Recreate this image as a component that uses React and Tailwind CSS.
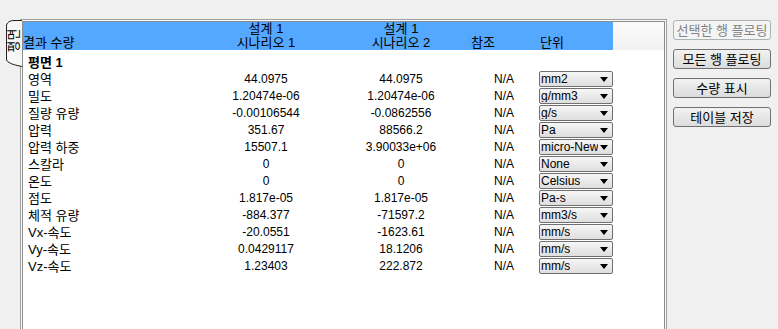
import React from "react";

const rows = [
  ["영역", "44.0975", "44.0975", "mm2"],
  ["밀도", "1.20474e-06", "1.20474e-06", "g/mm3"],
  ["질량 유량", "-0.00106544", "-0.0862556", "g/s"],
  ["압력", "351.67", "88566.2", "Pa"],
  ["압력 하중", "15507.1", "3.90033e+06", "micro-New"],
  ["스칼라", "0", "0", "None"],
  ["온도", "0", "0", "Celsius"],
  ["점도", "1.817e-05", "1.817e-05", "Pa-s"],
  ["체적 유량", "-884.377", "-71597.2", "mm3/s"],
  ["Vx-속도", "-20.0551", "-1623.61", "mm/s"],
  ["Vy-속도", "0.0429117", "18.1206", "mm/s"],
  ["Vz-속도", "1.23403", "222.872", "mm/s"],
];

const cols = "grid grid-cols-[178px_130px_140px_62px_80px]";

function UnitSelect({ value }) {
  return (
    <div className="flex items-center justify-between w-[74px] h-[16px] border border-[#707070] rounded-[2px] bg-gradient-to-b from-[#f6f6f6] to-[#dedede] pl-[1px] pr-[4px] overflow-hidden">
      <span className="whitespace-nowrap overflow-hidden leading-none text-black">{value}</span>
      <svg width="8" height="5" viewBox="0 0 8 5" className="shrink-0">
        <path d="M0 0 H8 L4 5 Z" fill="#000" />
      </svg>
    </div>
  );
}

function Button({ children, disabled }) {
  return (
    <button
      className={
        "w-[98px] h-[20px] rounded-[3px] border text-[13px] leading-none whitespace-nowrap " +
        (disabled
          ? "border-[#adb2b5] bg-[#f4f4f4] text-[#838383]"
          : "border-[#707070] bg-gradient-to-b from-[#f2f2f2] to-[#dcdcdc] text-black")
      }
    >
      {children}
    </button>
  );
}

function SideTab() {
  return (
    <div className="relative w-[16px] h-[47px] shrink-0 flex justify-center pt-[6px]">
      <svg className="absolute inset-0" width="16" height="47" viewBox="0 0 16 47">
        <path
          d="M16 0.5 H8 Q2 0.5 0.5 5 V40 Q2 44 16 46.5"
          fill="#f7f7f7"
          stroke="#222"
          strokeWidth="1"
        />
      </svg>
      <div className="relative h-[28px] w-[13px] flex items-center justify-center">
        <span className="-rotate-90 text-[13px] leading-none whitespace-nowrap text-black">
          평면
        </span>
      </div>
    </div>
  );
}

export default function App() {
  return (
    <div
      className="w-[778px] h-[329px] bg-[#f0f0f0] overflow-hidden flex items-start pt-[19px] pl-[6px] text-[12px] text-black"
      style={{ fontFamily: '"Liberation Sans", "Noto Sans CJK KR", sans-serif' }}
    >
      <div className="pt-[1px] -mr-[2px] z-10">
        <SideTab />
      </div>

      <div className="w-[647px] h-[330px] shrink-0 border border-[#a0a0a0] p-px bg-[#f9f9f9]">
        <div className="h-full border border-[#8c8c8c] bg-white flex flex-col">
          <div className="flex h-[28px] shrink-0">
            <div className={cols + " w-[590px] bg-[#55a8ff] items-end text-[13px]"}>
              <div className="leading-[14px]">결과 수량</div>
              <div className="flex flex-col items-center leading-[14px]">
                <span>설계 1</span>
                <span>시나리오 1</span>
              </div>
              <div className="flex flex-col items-center leading-[14px]">
                <span>설계 1</span>
                <span>시나리오 2</span>
              </div>
              <div className="leading-[14px]">참조</div>
              <div className="leading-[14px] pl-[7px]">단위</div>
            </div>
            <div className="flex-1 bg-gradient-to-b from-[#fbfbfb] to-[#f0f1f2]"></div>
          </div>

          <div className="h-[5px]"></div>
          <div className="h-[15px] flex items-center pl-[5px] font-bold text-[13px]">평면 1</div>

          {rows.map(([label, a, b, unit]) => (
            <div key={label} className={cols + " w-[590px] h-[17px] items-center"}>
              <div className="pl-[5px] whitespace-nowrap text-[13px] leading-none">{label}</div>
              <div className="text-center">{a}</div>
              <div className="text-center">{b}</div>
              <div className="text-right pr-[19px]">N/A</div>
              <div className="pl-[6px]">
                <UnitSelect value={unit} />
              </div>
            </div>
          ))}
        </div>
      </div>

      <div className="flex flex-col gap-[9px] pt-[1px] pl-[6px]">
        <Button disabled>선택한 행 플로팅</Button>
        <Button>모든 행 플로팅</Button>
        <Button>수량 표시</Button>
        <Button>테이블 저장</Button>
      </div>
    </div>
  );
}
